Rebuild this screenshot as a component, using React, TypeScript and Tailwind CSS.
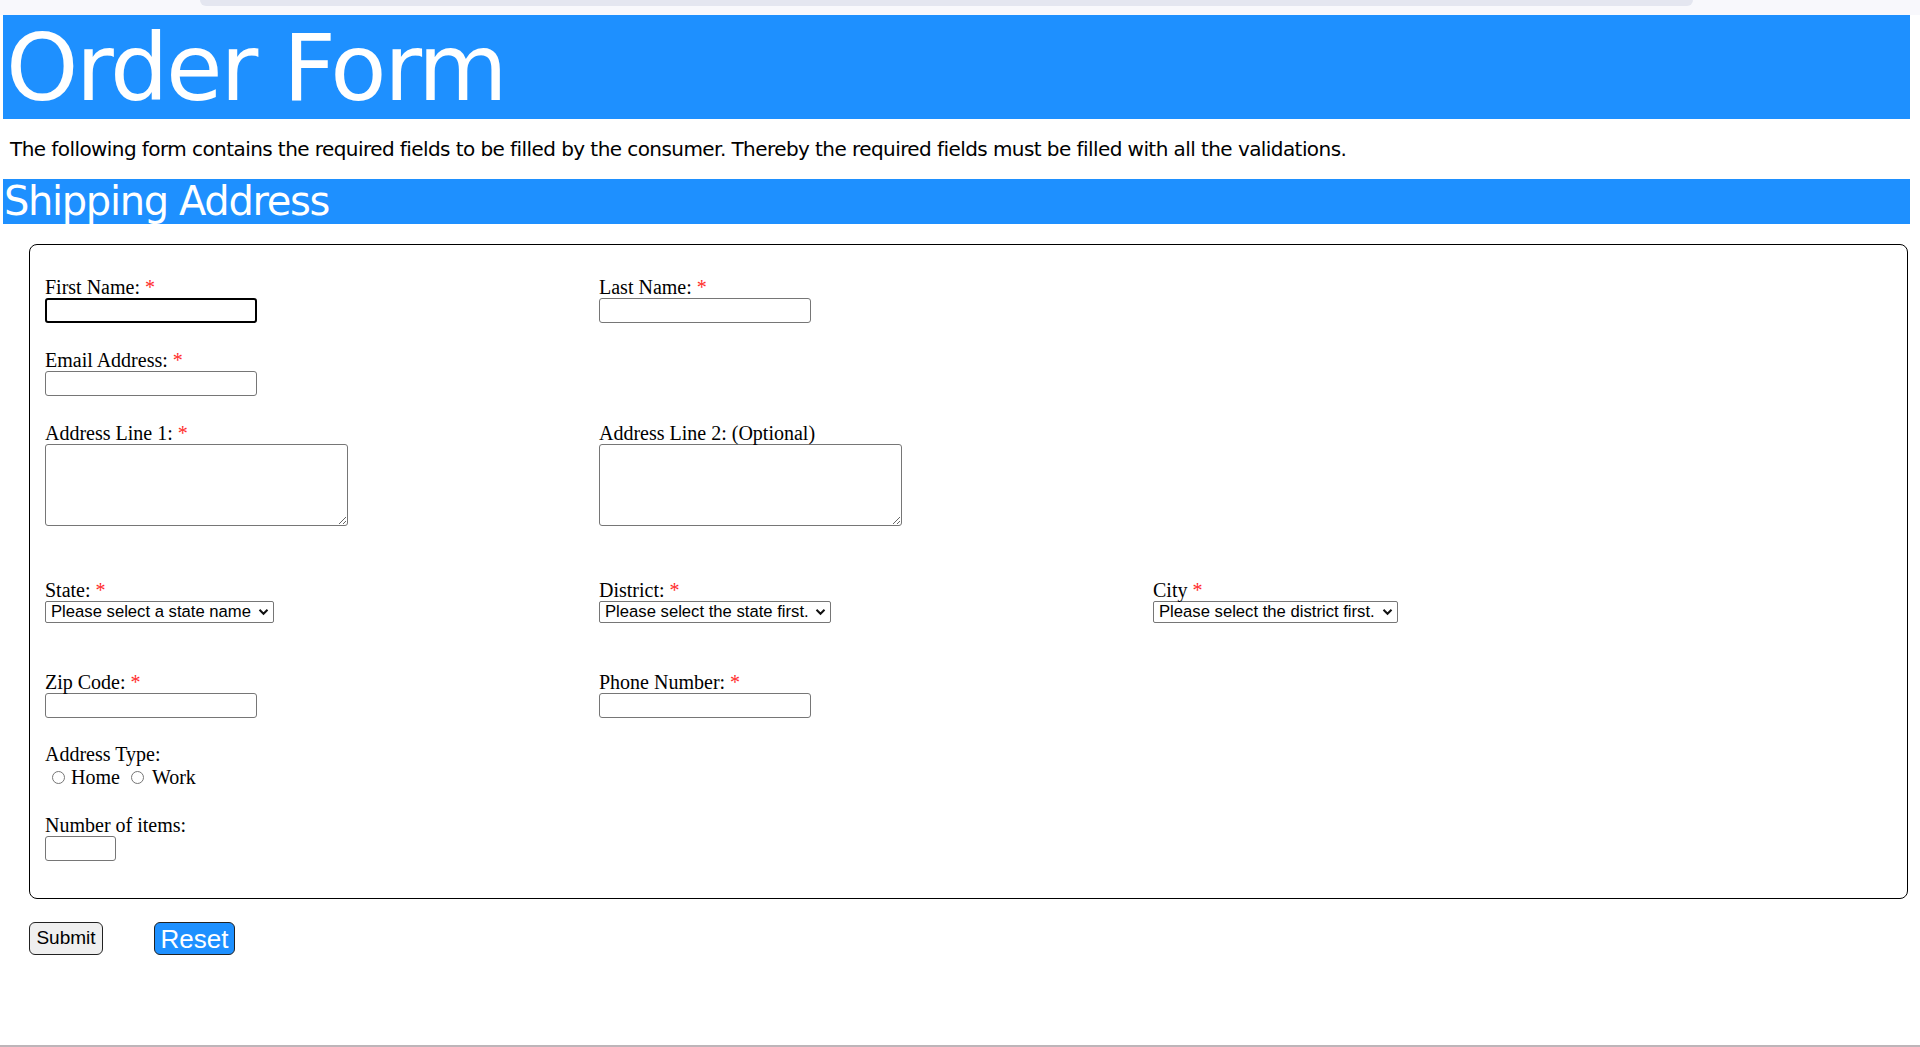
import React from "react";

const serif = { fontFamily: '"Liberation Serif", "Times New Roman", serif' };

function Req() {
  return <span className="text-[#ff2b2b]"> *</span>;
}

function Label({ text, required }: { text: string; required?: boolean }) {
  return (
    <div className="h-[23px] pt-[1px] text-[20px] leading-[23px] text-black whitespace-nowrap">
      {text}
      {required && <Req />}
    </div>
  );
}

function TextBox({ className }: { className: string }) {
  return <input type="text" className={className} />;
}

function Chevron() {
  return (
    <svg width="11" height="8" viewBox="0 0 11 8" className="ml-[6px] shrink-0">
      <path d="M1.5 1.8 L5.5 5.8 L9.5 1.8" fill="none" stroke="#111" strokeWidth="2" />
    </svg>
  );
}

function SelectBox({ text, className }: { text: string; className: string }) {
  return (
    <div
      className={`flex h-[22px] items-center border border-[#767676] rounded-[2px] pl-[5px] pr-[4px] text-[16.67px] text-black ${className}`}
      style={{ fontFamily: '"Liberation Sans", Arial, sans-serif' }}
    >
      <span className="flex-1 whitespace-nowrap leading-none">{text}</span>
      <Chevron />
    </div>
  );
}

function Radio() {
  return <span className="inline-block h-[13px] w-[13px] rounded-full border border-[#767676] bg-white" />;
}

export default function App() {
  return (
    <div className="flex h-[1047px] flex-col bg-white">
      {/* browser strip */}
      <div className="h-[15px] bg-[#f8f8fc]">
        <div className="ml-[200px] h-[6px] w-[1493px] rounded-b-[8px] bg-[#e4e6f0]" />
      </div>

      <h1
        className="ml-[3px] h-[104px] w-[1907px] bg-[#1e90ff] pl-[3px] pt-[2px] text-[92px] leading-[104px] tracking-[-2.3px] text-white"
        style={{ fontFamily: '"DejaVu Sans", Verdana, sans-serif' }}
      >
        Order Form
      </h1>

      <p
        className="mt-[18px] ml-[10px] text-[20px] leading-[24px] tracking-[-0.57px] text-black"
        style={{ fontFamily: '"DejaVu Sans", Verdana, sans-serif' }}
      >
        The following form contains the required fields to be filled by the consumer. Thereby the required fields must be filled with all the validations.
      </p>

      <h2
        className="mt-[18px] ml-[3px] h-[45px] w-[1907px] bg-[#1e90ff] pl-[1px] text-[40px] leading-[45px] tracking-[-1.35px] text-white"
        style={{ fontFamily: '"DejaVu Sans", Verdana, sans-serif' }}
      >
        Shipping Address
      </h2>

      <div
        className="mt-[20px] ml-[29px] flex w-[1879px] flex-col rounded-[8px] border border-black pt-[30px] pb-[37px] pl-[15px]"
        style={serif}
      >
        <div className="grid grid-cols-[554px_554px_554px]">
          <div>
            <Label text="First Name:" required />
            <TextBox className="block h-[25px] w-[212px] rounded-[3px] border-2 border-black bg-white" />
          </div>
          <div>
            <Label text="Last Name:" required />
            <TextBox className="block h-[25px] w-[212px] rounded-[3px] border border-[#767676] bg-white" />
          </div>
        </div>

        <div className="mt-[25px] grid grid-cols-[554px_554px_554px]">
          <div>
            <Label text="Email Address:" required />
            <TextBox className="block h-[25px] w-[212px] rounded-[3px] border border-[#767676] bg-white" />
          </div>
        </div>

        <div className="mt-[25px] grid grid-cols-[554px_554px_554px]">
          <div>
            <Label text="Address Line 1:" required />
            <textarea className="block h-[82px] w-[303px] resize rounded-[3px] border border-[#767676] bg-white" />
          </div>
          <div>
            <Label text="Address Line 2: (Optional)" />
            <textarea className="block h-[82px] w-[303px] resize rounded-[3px] border border-[#767676] bg-white" />
          </div>
        </div>

        <div className="mt-[52px] grid grid-cols-[554px_554px_554px]">
          <div>
            <Label text="State:" required />
            <SelectBox text="Please select a state name" className="w-[229px]" />
          </div>
          <div>
            <Label text="District:" required />
            <SelectBox text="Please select the state first." className="w-[232px]" />
          </div>
          <div>
            <Label text="City" required />
            <SelectBox text="Please select the district first." className="w-[245px]" />
          </div>
        </div>

        <div className="mt-[47px] grid grid-cols-[554px_554px_554px]">
          <div>
            <Label text="Zip Code:" required />
            <TextBox className="block h-[25px] w-[212px] rounded-[3px] border border-[#767676] bg-white" />
          </div>
          <div>
            <Label text="Phone Number:" required />
            <TextBox className="block h-[25px] w-[212px] rounded-[3px] border border-[#767676] bg-white" />
          </div>
        </div>

        <div className="mt-[24px]">
          <Label text="Address Type:" />
          <div className="flex h-[24px] items-center text-[20px] text-black">
            <span className="ml-[7px] mr-[6px] flex items-center">
              <Radio />
            </span>
            <span>Home</span>
            <span className="ml-[11px] mr-[8px] flex items-center">
              <Radio />
            </span>
            <span>Work</span>
          </div>
        </div>

        <div className="mt-[24px]">
          <Label text="Number of items:" />
          <TextBox className="block h-[25px] w-[71px] rounded-[3px] border border-[#767676] bg-white" />
        </div>
      </div>

      <div className="mt-[23px] ml-[29px] flex items-center" style={{ fontFamily: '"Liberation Sans", Arial, sans-serif' }}>
        <button className="h-[33px] w-[74px] rounded-[6px] border border-[#222] bg-[#efefef] text-[19px] text-black">
          Submit
        </button>
        <button className="ml-[51px] h-[33px] w-[81px] rounded-[6px] border border-[#222] bg-[#1e90ff] text-[26px] leading-none text-white">
          Reset
        </button>
      </div>

      <div className="mt-auto h-[2px] bg-[#bdb5b9]" />
    </div>
  );
}
